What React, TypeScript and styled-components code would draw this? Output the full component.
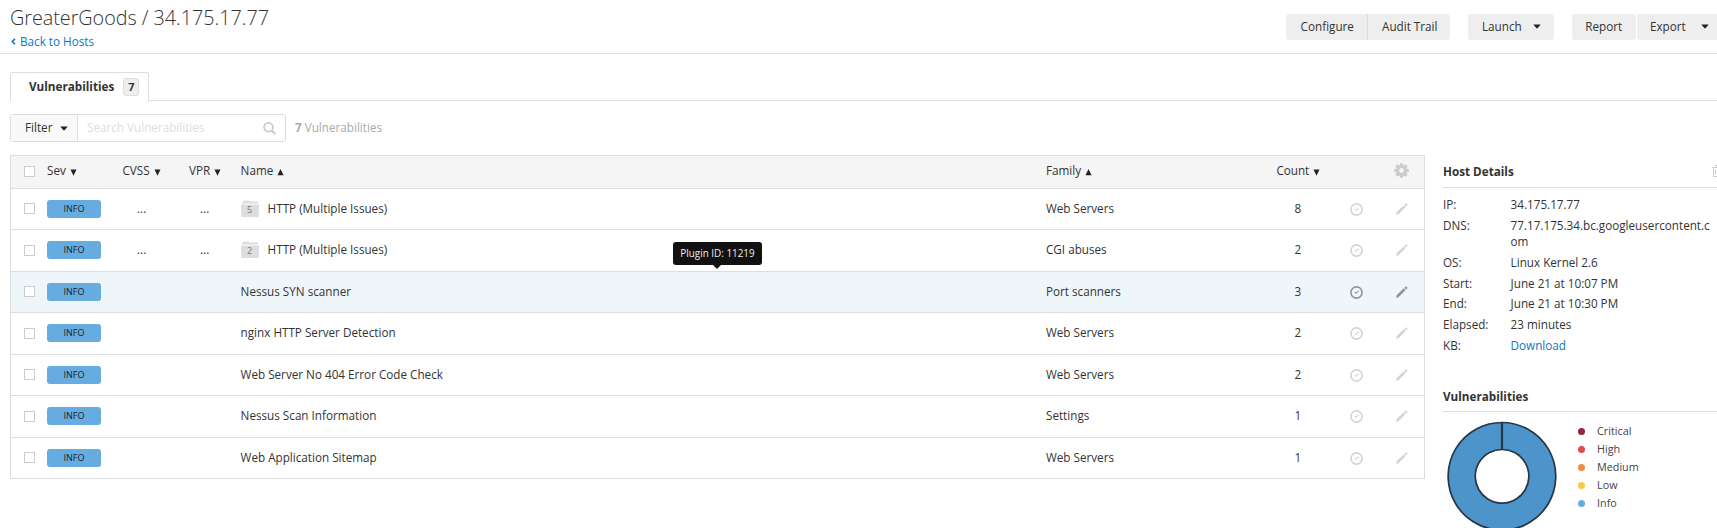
import React from "react";
import styled, { createGlobalStyle, css } from "styled-components";

const line = "#dddddd";

const GlobalStyle = createGlobalStyle`
  * { box-sizing: border-box; }
  html, body { margin: 0; height: 528px; overflow: hidden; background: #fff; }
  body { font-family: "Open Sans", sans-serif; font-size: 11.7px; line-height: 16px; color: #333; }
  a { color: #0b77c0; text-decoration: none; }
`;

const Page = styled.div`
  width: 1717px;
  height: 528px;
  overflow: hidden;
`;

const Header = styled.header`
  display: flex;
  justify-content: space-between;
  height: 54px;
  padding-left: 10px;
  border-bottom: 1px solid ${line};
`;

const Title = styled.h1`
  margin: 4px 0 0;
  font-size: 19.8px;
  font-weight: 300;
  letter-spacing: -0.03px;
  line-height: 27px;
  white-space: nowrap;
`;

const BackLink = styled.a`
  display: flex;
  align-items: center;
  gap: 4px;
  margin: 2px 0 0 1px;
  line-height: 16px;
`;

const Actions = styled.div`
  display: flex;
  padding-top: 14px;
`;

const Button = styled.button<{ $w: number; $ml?: number; $divided?: boolean; $radius?: string; $pr?: number; $pl?: number }>`
  display: flex;
  align-items: center;
  justify-content: space-between;
  width: ${(p) => p.$w}px;
  height: 26px;
  margin: 0 0 0 ${(p) => p.$ml ?? 0}px;
  padding: 0 ${(p) => p.$pr ?? 13}px 2px ${(p) => p.$pl ?? 14}px;
  border: 0;
  border-radius: ${(p) => p.$radius ?? "3px"};
  background: #eee;
  color: #333;
  font: inherit;
  white-space: nowrap;
  ${(p) => p.$divided && css`border-left: 1px solid ${line};`}
`;

const Tabs = styled.nav`
  display: flex;
  height: 47px;
  padding: 18px 0 0 10px;
`;

const Tab = styled.div`
  display: flex;
  align-items: center;
  gap: 9px;
  width: 139px;
  height: 29px;
  padding-left: 18px;
  border: 1px solid ${line};
  border-bottom: 0;
  border-radius: 3px 3px 0 0;
  font-weight: 700;
`;

const Label = styled.span`
  margin-bottom: 2px;
`;

const TabRule = styled.div`
  flex: 1;
  border-bottom: 1px solid ${line};
`;

const TabCount = styled.span`
  width: 16px;
  height: 18px;
  border: 1px solid ${line};
  border-radius: 3px;
  background: #eee;
  font-size: 10.8px;
  line-height: 16px;
  text-align: center;
`;

const Toolbar = styled.div`
  display: flex;
  align-items: center;
  height: 28px;
  margin: 13px 0 0 10px;
`;

const SearchGroup = styled.div`
  display: flex;
  width: 276px;
  height: 28px;
  border: 1px solid ${line};
  border-radius: 3px;
  overflow: hidden;
`;

const FilterButton = styled.div`
  display: flex;
  align-items: center;
  justify-content: space-between;
  width: 67px;
  padding: 0 9px 0 14px;
  border-right: 1px solid ${line};
  background: #f9f9f9;
`;

const SearchField = styled.div`
  display: flex;
  flex: 1;
  align-items: center;
  justify-content: space-between;
  padding: 0 9px;
  color: #ddd;
`;

const ResultCount = styled.span`
  margin: 0 0 2px 9px;
  color: #aaa;
`;

const Content = styled.main`
  display: flex;
  padding: 13px 0 0 10px;
`;

const Table = styled.section`
  flex: none;
  width: 1415px;
  height: 324px;
  border: 1px solid ${line};
`;

const Row = styled.div<{ $h: number; $tone?: "head" | "active" }>`
  display: grid;
  grid-template-columns: 36px 75px 67px 51.6px 805.4px 230px 74px 44px 1fr;
  grid-template-rows: ${(p) => (p.$tone === "head" ? 32 : 40)}px;
  align-items: center;
  height: ${(p) => p.$h}px;
  border-bottom: 1px solid ${line};
  background: ${(p) => (p.$tone === "head" ? "#f5f5f5" : p.$tone === "active" ? "#eef6fa" : "#fff")};
  &:last-child { border-bottom: 0; }
`;

const Cell = styled.div<{ $indent?: number }>`
  display: flex;
  align-items: center;
  padding-left: ${(p) => p.$indent ?? 0}px;
  white-space: nowrap;
`;

const HeadCell = styled(Cell)`
  padding-bottom: 4px;
`;

const TextCell = styled(Cell)`
  padding-bottom: 2px;
`;

const Check = styled.span<{ $top: number }>`
  align-self: start;
  width: 11px;
  height: 11px;
  margin: ${(p) => p.$top}px 0 0 13px;
  border: 1px solid #ccc;
  background: #fff;
`;

const Severity = styled.span`
  width: 54px;
  height: 18px;
  border-radius: 3px;
  background: #67ace1;
  color: #1c1c1c;
  font-size: 9px;
  line-height: 17px;
  text-align: center;
`;

const Folder = styled.span`
  position: relative;
  display: flex;
  width: 18px;
  height: 17px;
  margin: 0 9px -1px 0;
`;

const FolderCount = styled.span`
  position: absolute;
  inset: 3px 0 0;
  color: #777;
  font-size: 9px;
  line-height: 13px;
  text-align: center;
`;

const NameCell = styled(TextCell)`
  position: relative;
`;

const Tooltip = styled.span`
  position: absolute;
  left: 432.4px;
  top: -41px;
  width: 89px;
  height: 23px;
  border-radius: 3px;
  background: #111;
  color: #eee;
  font-size: 9.9px;
  line-height: 22px;
  text-align: center;
  &::after {
    content: "";
    position: absolute;
    left: 40px;
    top: 23px;
    border: 4px solid transparent;
    border-top-color: #111;
    border-bottom: 0;
  }
`;

const Sidebar = styled.aside`
  flex: none;
  width: 280px;
  margin-left: 18px;
`;

const SideTitle = styled.h2<{ $h: number; $pb: number }>`
  display: flex;
  align-items: flex-end;
  justify-content: space-between;
  height: ${(p) => p.$h}px;
  margin: 0;
  padding-bottom: ${(p) => p.$pb}px;
  border-bottom: 1px solid ${line};
  font-size: 11.7px;
  line-height: 16px;
`;

const TrashIcon = styled.svg`
  margin-bottom: 2px;
`;

const Details = styled.dl`
  margin: 8px 0 0;
`;

const Detail = styled.div<{ $h: number }>`
  display: flex;
  height: ${(p) => p.$h}px;
`;

const Term = styled.dt`
  width: 67.6px;
`;

const Value = styled.dd`
  width: 202px;
  margin: 0;
  word-break: break-all;
`;

const ChartArea = styled.div`
  display: flex;
`;

const Legend = styled.ul`
  margin: 10px 0 0 17px;
  padding: 0;
  list-style: none;
  font-size: 10.8px;
`;

const LegendItem = styled.li<{ $color: string }>`
  display: flex;
  align-items: center;
  height: 18px;
  color: #444;
  &::before {
    content: "";
    width: 7px;
    height: 7px;
    margin-right: 12px;
    border-radius: 50%;
    background: ${(p) => p.$color};
  }
`;

const SortIcon = styled.svg`
  margin: 5px 0 0 4px;
`;

const Sort = ({ up }: { up?: boolean }) => (
  <SortIcon width="7" height="7" viewBox="0 0 7 7">
    <path d={up ? "M3.5 0 6.5 6.2H.5Z" : "M.5.5H6.5L3.5 6.8Z"} fill="#222" />
  </SortIcon>
);

const Caret = () => (
  <svg width="8" height="5" viewBox="0 0 8 5">
    <path d="M.3.4H7.7L4.5 4.3Q4 4.8 3.5 4.3Z" fill="#222" />
  </svg>
);

const Clock = ({ color }: { color: string }) => (
  <svg width="13" height="13" viewBox="0 0 13 13" fill="none" stroke={color}>
    <circle cx="6.5" cy="6.5" r="5.6" strokeWidth="1.6" />
    <path d="M4.5 6.4 6.1 7.1 8.6 4.9" strokeWidth="1.1" />
  </svg>
);

const Pencil = ({ color }: { color: string }) => (
  <svg width="12" height="12" viewBox="0 0 12 12" fill={color}>
    <path d="M0 11.9 .8 8.9 7.8 2.3 9.6 4.1 2.8 11Z M8.4 1.7 9.6.6Q10.2.2 10.8.7L11.2 1.1Q11.7 1.7 11.2 2.4L10.2 3.5Z" />
  </svg>
);

const Gear = () => (
  <svg width="15" height="15" viewBox="0 0 15 15">
    <g fill="#ccc">
      {[0, 45, 90, 135].map((a) => (
        <rect key={a} x="5.9" y="0.2" width="3.2" height="14.6" rx=".5" transform={`rotate(${a} 7.5 7.5)`} />
      ))}
      <circle cx="7.5" cy="7.5" r="5.6" />
    </g>
    <circle cx="7.5" cy="7.5" r="2.4" fill="#f5f5f5" />
  </svg>
);

const Trash = () => (
  <TrashIcon width="11" height="12" viewBox="0 0 11 12" fill="none" stroke="#ccc">
    <path d="M0 2.5H11M3.5 2V.5H7.5V2M1.5 3V11.5H9.5V3M3.5 4.5V10M5.5 4.5V10M7.5 4.5V10" />
  </TrashIcon>
);

type Vuln = { name: string; family: string; count: number; group?: number; active?: boolean; h: number };

const vulns: Vuln[] = [
  { name: "HTTP (Multiple Issues)", family: "Web Servers", count: 8, group: 5, h: 41 },
  { name: "HTTP (Multiple Issues)", family: "CGI abuses", count: 2, group: 2, h: 42 },
  { name: "Nessus SYN scanner", family: "Port scanners", count: 3, active: true, h: 41 },
  { name: "nginx HTTP Server Detection", family: "Web Servers", count: 2, h: 42 },
  { name: "Web Server No 404 Error Code Check", family: "Web Servers", count: 2, h: 41 },
  { name: "Nessus Scan Information", family: "Settings", count: 1, h: 42 },
  { name: "Web Application Sitemap", family: "Web Servers", count: 1, h: 40 },
];

const details: [string, React.ReactNode, number][] = [
  ["IP:", "34.175.17.77", 21],
  ["DNS:", "77.17.175.34.bc.googleusercontent.com", 37],
  ["OS:", "Linux Kernel 2.6", 21],
  ["Start:", "June 21 at 10:07 PM", 20],
  ["End:", "June 21 at 10:30 PM", 21],
  ["Elapsed:", "23 minutes", 21],
  ["KB:", <a key="kb">Download</a>, 20],
];

const legend = [
  ["Critical", "#91243e"],
  ["High", "#dd4b50"],
  ["Medium", "#f18c43"],
  ["Low", "#f8c851"],
  ["Info", "#67ace1"],
];

export default function App() {
  return (
    <Page>
      <GlobalStyle />
      <Header>
        <div>
          <Title>GreaterGoods / 34.175.17.77</Title>
          <BackLink>
            <svg width="5" height="7" viewBox="0 0 5 7" fill="none" stroke="#0b77c0" strokeWidth="1.6">
              <path d="M4 .8 1.3 3.5 4 6.2" />
            </svg>
            Back to Hosts
          </BackLink>
        </div>
        <Actions>
          <Button $w={81} $pl={14.6} $radius="3px 0 0 3px">Configure</Button>
          <Button $w={83} $divided $radius="0 3px 3px 0">Audit Trail</Button>
          <Button $w={86} $ml={18}>Launch <Caret /></Button>
          <Button $w={64} $ml={18} $pl={13.3}>Report</Button>
          <Button $w={80} $ml={1} $radius="3px 0 0 3px" $pl={13} $pr={8}>Export <Caret /></Button>
        </Actions>
      </Header>
      <Tabs>
        <Tab><Label>Vulnerabilities</Label> <TabCount>7</TabCount></Tab>
        <TabRule />
      </Tabs>
      <Toolbar>
        <SearchGroup>
          <FilterButton><Label>Filter</Label> <Caret /></FilterButton>
          <SearchField>
            <Label>Search Vulnerabilities</Label>
            <svg width="13" height="13" viewBox="0 0 13 13" fill="none" stroke="#ccc">
              <circle cx="5.5" cy="5.3" r="4.4" strokeWidth="1.7" />
              <path d="M8.7 8.6 12.2 12" strokeWidth="2.2" />
            </svg>
          </SearchField>
        </SearchGroup>
        <ResultCount><b>7</b> Vulnerabilities</ResultCount>
      </Toolbar>
      <Content>
        <Table>
          <Row $h={33} $tone="head">
            <Check $top={10} />
            <HeadCell>Sev<Sort /></HeadCell>
            <HeadCell $indent={0.5}>CVSS<Sort /></HeadCell>
            <HeadCell>VPR<Sort /></HeadCell>
            <HeadCell>Name<Sort up /></HeadCell>
            <HeadCell>Family<Sort up /></HeadCell>
            <HeadCell $indent={0.4}>Count<Sort /></HeadCell>
            <Cell />
            <HeadCell><Gear /></HeadCell>
          </Row>
          {vulns.map((v, i) => (
            <Row key={v.name + v.family} $h={v.h} $tone={v.active ? "active" : undefined}>
              <Check $top={i % 2 ? 15 : 14} />
              <Cell><Severity>INFO</Severity></Cell>
              <TextCell $indent={15}>{v.group ? "..." : ""}</TextCell>
              <TextCell $indent={11}>{v.group ? "..." : ""}</TextCell>
              <NameCell>
                {v.group && (
                  <Folder>
                    <svg width="18" height="17" viewBox="0 0 18 17" fill="#ddd">
                      <path d="M1 3.6V2.4Q1 1.6 2 1.6L3.2.5H7.2L8.4 1.6H16.5Q17 1.6 17 2.2V3.6Z M0 4.6H18L17.7 17H.3Z" />
                    </svg>
                    <FolderCount>{v.group}</FolderCount>
                  </Folder>
                )}
                {v.name}
                {v.active && <Tooltip>Plugin ID: 11219</Tooltip>}
              </NameCell>
              <TextCell>{v.family}</TextCell>
              <TextCell $indent={18.6}>{v.count}</TextCell>
              <Cell><Clock color={v.active ? "#8f9497" : "#d4d4d4"} /></Cell>
              <Cell $indent={2}><Pencil color={v.active ? "#8f9497" : "#d4d4d4"} /></Cell>
            </Row>
          ))}
        </Table>
        <Sidebar>
          <SideTitle $h={33} $pb={8}>Host Details <Trash /></SideTitle>
          <Details>
            {details.map(([term, value, h]) => (
              <Detail key={term} $h={h}>
                <Term>{term}</Term>
                <Value>{value}</Value>
              </Detail>
            ))}
          </Details>
          <SideTitle $h={55} $pb={7}>Vulnerabilities</SideTitle>
          <ChartArea>
            <svg width="118" height="116" viewBox="0 -1 118 116">
              <path
                d="M59 9.5A53.8 53.8 0 1 1 58.9 9.5ZM59 36.5A26.8 26.8 0 1 0 59.1 36.5Z"
                fill="#4d94cb"
                stroke="#263746"
                strokeWidth="1.7"
              />
              <path d="M59 9.5V36.5" stroke="#263746" strokeWidth="2.2" />
            </svg>
            <Legend>
              {legend.map(([name, color]) => (
                <LegendItem key={name} $color={color}>{name}</LegendItem>
              ))}
            </Legend>
          </ChartArea>
        </Sidebar>
      </Content>
    </Page>
  );
}
